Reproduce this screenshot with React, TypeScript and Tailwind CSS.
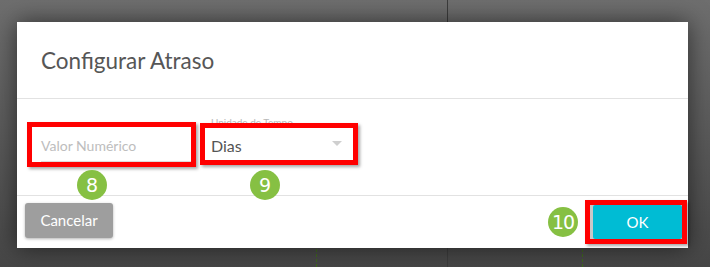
import React from "react";

const Badge = ({ n, className = "" }: { n: string; className?: string }) => (
  <div
    className={`flex h-[30px] w-[30px] items-center justify-center rounded-full bg-[#86c043] text-[19px] leading-none text-white ${className}`}
    style={{ fontFamily: '"DejaVu Sans", sans-serif' }}
  >
    {n}
  </div>
);

export default function App() {
  return (
    <div
      className="relative h-[267px] w-[710px] overflow-hidden bg-gradient-to-b from-[#6e6e6e] to-[#464646] pl-[17px] pt-[22px]"
      style={{ fontFamily: "Lato, 'Open Sans', sans-serif" }}
    >
      {/* page behind the overlay */}
      <div className="absolute left-[447px] top-0 h-full w-px bg-[#3c3c3c]" />
      <div className="absolute left-[316px] top-[249px] h-[18px] border-l border-dashed border-[#3f6a1c]" />
      <div className="absolute left-[582px] top-[249px] h-[18px] border-l border-dashed border-[#3f6a1c]" />

      <div className="relative flex h-[226px] w-[671px] flex-col bg-white shadow-[0_0_22px_rgba(0,0,0,0.55)]">
        <div className="flex h-[77px] items-center border-b border-[#e2e2e2] pl-[24px] pt-[2px]">
          <h1 className="text-[22.5px] font-normal text-[#565656]">Configurar Atraso</h1>
        </div>

        <div className="relative h-[96px] pl-[10px] pt-[23px]">
          <div className="flex items-start gap-[4px]">
            <div className="h-[45px] w-[169px] border-[5px] border-[#ff0000] bg-white pl-[9px] shadow-[2px_2px_3px_rgba(0,0,0,0.35)]">
              <div className="flex h-full items-center border-b border-[#dcdcdc] pt-[2px] text-[14px] text-[#bdbdbd]">
                Valor Numérico
              </div>
            </div>

            <div className="relative pt-px">
              <span className="absolute left-[11px] top-[-5px] text-[10px] leading-none text-[#b8b8b8]">
                Unidade de Tempo
              </span>
              <div className="relative z-10 flex h-[42px] w-[158px] items-center justify-between border-[5px] border-[#ff0000] bg-white pl-[6px] pr-[11px] pt-[3px] shadow-[2px_2px_3px_rgba(0,0,0,0.35)]">
                <span className="text-[16px] text-[#555555]">Dias</span>
                <svg width="10" height="6" viewBox="0 0 10 6" className="mb-[4px]">
                  <path d="M0 0 L10 0 L5 5 Z" fill="#cfcfcf" />
                </svg>
              </div>
            </div>
          </div>

          <Badge n="8" className="absolute left-[60px] top-[71px] z-20" />
          <Badge n="9" className="absolute left-[233px] top-[71px] z-20" />
        </div>

        <div className="flex flex-1 items-center justify-between border-t border-[#e2e2e2] pl-[8px] pr-px">
          <button className="mb-[4px] h-[35px] w-[88px] rounded-[3px] bg-[#9e9e9e] text-[15px] text-white shadow-[0_1px_3px_rgba(0,0,0,0.3)]">
            Cancelar
          </button>
          <div className="flex items-center gap-[7px]">
            <Badge n="10" className="text-[18px] tracking-[-1px]" />
            <div className="flex h-[44px] w-[102px] items-center border-[5px] border-[#ff0000] bg-[#c8c8c8] pl-[3px] shadow-[2px_2px_3px_rgba(0,0,0,0.35)]">
              <button className="h-full w-[89px] rounded-[2px] bg-[#00bcd4] text-[15px] text-white">
                OK
              </button>
            </div>
          </div>
        </div>
      </div>
    </div>
  );
}
